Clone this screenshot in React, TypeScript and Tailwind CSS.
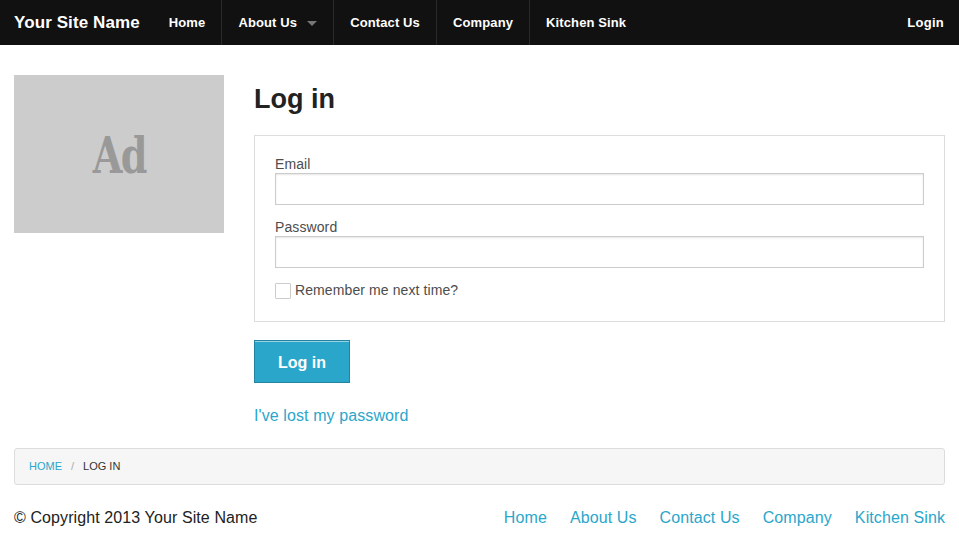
import React from "react";

const navItems = ["Home", "About Us", "Contact Us", "Company", "Kitchen Sink"];

export default function App() {
  return (
    <div className="w-[959px] min-h-[555px] bg-white font-['Liberation_Sans',Arial,sans-serif] text-[#222]">
      {/* Top bar */}
      <div className="h-[45px] bg-[#111] flex items-stretch text-white">
        <div className="flex items-center pl-[14px] pr-[13px] text-[17px] font-bold tracking-[0.1px]">Your Site Name</div>
        <ul className="flex items-stretch text-[13px] font-bold tracking-[0.12px]">
          {navItems.map((item, i) => (
            <li key={item} className={`flex items-center ${i > 0 ? "border-l border-[#2a2a2a]" : ""} pl-4 pr-4`}>
              <span>{item}</span>
              {item === "About Us" && (
                <span className="ml-[10px] w-0 h-0 border-l-[5px] border-r-[5px] border-t-[5px] border-l-transparent border-r-transparent border-t-[#777] mt-[1px]" />
              )}
            </li>
          ))}
        </ul>
        <div className="ml-auto flex items-center pr-[15px] text-[13px] font-bold tracking-[0.25px]">Login</div>
      </div>

      {/* Main */}
      <div className="px-[14px] pt-[30px] flex gap-[30px]">
        <div className="w-[210px] h-[158px] bg-[#ccc] flex items-center justify-center shrink-0">
          <span className="font-['DejaVu_Serif',serif] font-bold text-[50px] text-[#999] leading-none tracking-[-2px] [font-stretch:condensed] scale-x-[0.85] inline-block mt-[4px]">Ad</span>
        </div>
        <div className="flex-1">
          <h1 className="mt-[8px] text-[27px] font-bold leading-[32px] text-[#222]">Log in</h1>
          <div className="mt-[20px] border border-[#ddd] pt-5 px-5 pb-[22px]">
            <label className="block text-[14px] leading-[17px] text-[#4d4d4d] tracking-[0.1px]">Email</label>
            <div className="h-[32px] border border-[#ccc] bg-white shadow-[inset_0_1px_2px_rgba(0,0,0,0.1)]" />
            <label className="block mt-[14px] text-[14px] leading-[17px] text-[#4d4d4d] tracking-[0.1px]">Password</label>
            <div className="h-[32px] border border-[#ccc] bg-white shadow-[inset_0_1px_2px_rgba(0,0,0,0.1)]" />
            <div className="mt-[14px] flex items-center gap-1">
              <span className="w-4 h-4 border border-[#ccc] bg-white rounded-[1px]" />
              <span className="text-[14px] leading-[17px] text-[#4d4d4d] tracking-[0.1px]">Remember me next time?</span>
            </div>
          </div>
          <button className="mt-[18px] w-[96px] h-[43px] bg-[#2ba6cb] border border-[#2284a1] shadow-[inset_0_1px_0_rgba(255,255,255,0.5)] text-white text-[16px] font-bold flex items-center justify-center pt-[2px]">
            Log in
          </button>
          <a className="block mt-[21px] text-[16px] leading-6 text-[#2ba6cb] tracking-[0.1px]">I've lost my password</a>
        </div>
      </div>

      {/* Breadcrumbs */}
      <div className="mx-[14px] mt-[20px] h-[37px] bg-[#f6f6f6] border border-[#dcdcdc] rounded-[3px] flex items-center px-[14px] text-[11px] uppercase">
        <span className="text-[#2ba6cb]">Home</span>
        <span className="mx-[9px] text-[#aaa]">/</span>
        <span className="text-[#333]">Log in</span>
      </div>

      {/* Footer */}
      <div className="mx-[14px] mt-[21px] flex items-center text-[16px] leading-6 tracking-[0.1px]">
        <span className="text-[#222]">© Copyright 2013 Your Site Name</span>
        <div className="ml-auto flex gap-[23px] text-[#2ba6cb] tracking-[0.1px]">
          {navItems.map((item) => (
            <a key={item}>{item}</a>
          ))}
        </div>
      </div>
    </div>
  );
}
